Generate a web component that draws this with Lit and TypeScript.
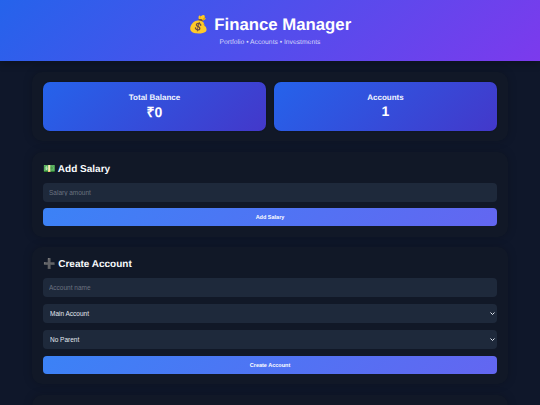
import { LitElement, html, css } from "lit";
import { customElement } from "lit/decorators.js";

@customElement("app-root")
export class AppRoot extends LitElement {
  static styles = css`
    :host { display: block; zoom: 0.5; height: 810px; overflow: hidden; background: #0f172a; font-family: "Liberation Sans", Arial, sans-serif; color: #fff; text-rendering: geometricPrecision; }
    * { box-sizing: border-box; }
    header { height: 122px; padding-top: 28px; text-align: center; background: linear-gradient(135deg, #2563eb, #7c3aed); box-shadow: 0 4px 16px rgba(0,0,0,.3); }
    h1 { margin: 0; font-size: 33.5px; line-height: 42px; font-weight: 700; }
    .sub { margin-top: 5px; font-size: 13.5px; line-height: 18px; color: #d5d6fb; }
    main { width: 952px; margin: 0 auto; padding-top: 22px; display: flex; flex-direction: column; gap: 21px; }
    .card { background: #111827; border-radius: 20px; padding: 22px 22px 21px; box-shadow: 0 0 20px rgba(0,0,0,.2); }
    .stats { display: grid; grid-template-columns: 1fr 1fr; gap: 16px; padding-top: 20px; }
    .stat { height: 97px; border-radius: 14px; text-align: center; padding-top: 21px; background: linear-gradient(135deg, #2563eb, #4338ca); box-shadow: 0 0 4px rgba(0,0,0,.3); }
    .stat .l { font-size: 16px; line-height: 20px; font-weight: 700; color: #f1f5ff; }
    .stat .v { font-size: 28px; font-weight: 700; }
    .stat .v.plain { line-height: 32px; }
    h2 { margin: 0 0 12px; font-size: 20px; line-height: 28px; font-weight: 700; color: #f8fafc; }
    .form { display: flex; flex-direction: column; gap: 13px; }
    input, select { display: block; width: 100%; height: 38px; border: 0; border-radius: 8px; background-color: #1e293b; color: #e2e8f0; font-family: inherit; font-size: 13px; padding: 0 12px; margin: 0; outline: none; }
    select { appearance: none; height: 39px; padding: 0 20px 0 14px; background-image: url("data:image/svg+xml,%3Csvg xmlns='http://www.w3.org/2000/svg' width='10' height='6' viewBox='0 0 10 6'%3E%3Cpath d='M1 1l4 4 4-4' fill='none' stroke='%23e2e8f0' stroke-width='2'/%3E%3C/svg%3E"); background-repeat: no-repeat; background-position: right 4px center; background-size: 10px 6px; }
    input::placeholder { color: #6b7280; }
    button { display: block; width: 100%; height: 36px; border: 0; border-radius: 8px; background: linear-gradient(135deg, #3b82f6, #6366f1); color: #fff; font-family: inherit; font-size: 11px; font-weight: 700; padding: 0; }
    .empty { height: 120px; }
  `;

  render() {
    return html`
      <header>
        <h1>💰 Finance Manager</h1>
        <div class="sub">Portfolio • Accounts • Investments</div>
      </header>
      <main>
        <section class="card stats">
          <div class="stat"><div class="l">Total Balance</div><div class="v">₹0</div></div>
          <div class="stat"><div class="l">Accounts</div><div class="v plain">1</div></div>
        </section>
        <section class="card">
          <h2>💵 Add Salary</h2>
          <div class="form">
            <input placeholder="Salary amount" />
            <button>Add Salary</button>
          </div>
        </section>
        <section class="card">
          <h2>➕ Create Account</h2>
          <div class="form">
            <input placeholder="Account name" />
            <select><option>Main Account</option></select>
            <select><option>No Parent</option></select>
            <button>Create Account</button>
          </div>
        </section>
        <section class="card empty"></section>
      </main>
    `;
  }
}
